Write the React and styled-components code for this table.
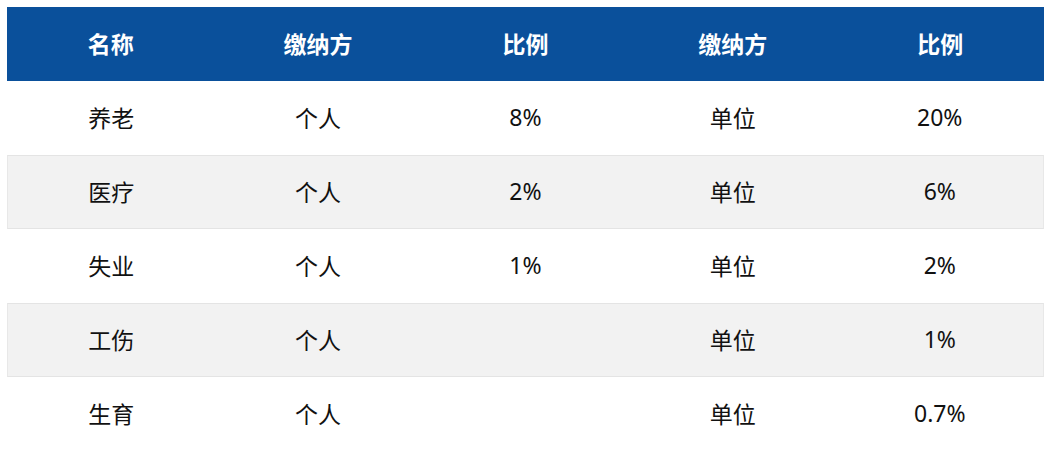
import React from "react"
import styled, { createGlobalStyle } from "styled-components"

const GlobalStyle = createGlobalStyle`
  html, body {
    margin: 0;
    padding: 0;
    background: #fff;
  }
  body {
    font-family: "Noto Sans", "Noto Sans CJK SC", sans-serif;
  }
`

const Page = styled.div`
  padding: 7px;
`

const Table = styled.table`
  width: 100%;
  border-collapse: separate;
  border-spacing: 0;
  table-layout: fixed;
  font-size: 23px;
  color: #111;
`

const HeadRow = styled.tr`
  background: #0a509b;
`

const HeadCell = styled.th`
  height: 74px;
  box-sizing: border-box;
  padding: 0 0 3px;
  color: #fff;
  font-weight: 700;
  text-align: center;
  vertical-align: middle;
`

const Cell = styled.td`
  height: 74px;
  box-sizing: border-box;
  padding: 0 0 3px;
  text-align: center;
  vertical-align: middle;
  font-weight: 400;
  background: ${(p) => (p.$shaded ? "#f2f2f2" : "#fff")};
  border-top: 1px solid ${(p) => (p.$shaded ? "#e4e4e4" : "#fff")};
  border-bottom: 1px solid ${(p) => (p.$shaded ? "#e4e4e4" : "#fff")};

  &:first-child {
    border-left: 1px solid ${(p) => (p.$shaded ? "#e8e8e8" : "#fff")};
  }
  &:last-child {
    border-right: 1px solid ${(p) => (p.$shaded ? "#e8e8e8" : "#fff")};
  }
`

const columns = ["名称", "缴纳方", "比例", "缴纳方", "比例"]

const rows = [
  ["养老", "个人", "8%", "单位", "20%"],
  ["医疗", "个人", "2%", "单位", "6%"],
  ["失业", "个人", "1%", "单位", "2%"],
  ["工伤", "个人", "", "单位", "1%"],
  ["生育", "个人", "", "单位", "0.7%"],
]

export default function App() {
  return (
    <Page>
      <GlobalStyle />
      <Table>
        <thead>
          <HeadRow>
            {columns.map((c, i) => (
              <HeadCell key={i}>{c}</HeadCell>
            ))}
          </HeadRow>
        </thead>
        <tbody>
          {rows.map((r, i) => (
            <tr key={i}>
              {r.map((v, j) => (
                <Cell key={j} $shaded={i % 2 === 1}>
                  {v}
                </Cell>
              ))}
            </tr>
          ))}
        </tbody>
      </Table>
    </Page>
  )
}
